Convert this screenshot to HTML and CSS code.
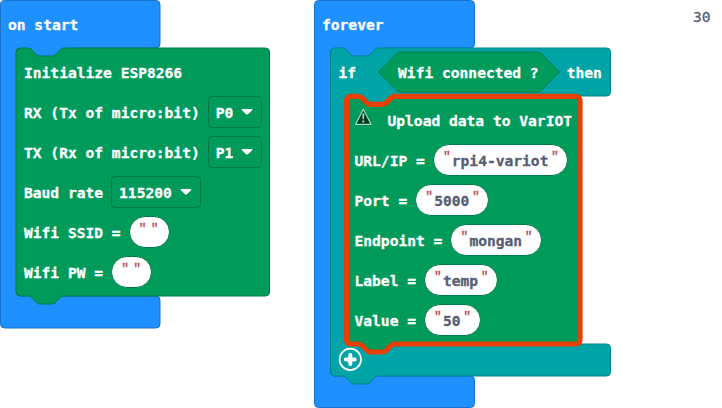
FILE: index.html
```html
<!DOCTYPE html>
<html lang="en">
<head>
<meta charset="utf-8">
<title>Blocks workspace</title>
<link rel="stylesheet" href="styles.css">
</head>
<body>
<main class="workspace">
  <section class="stack stack-start">
    <svg class="shape" width="280" height="332" aria-hidden="true">
      <path class="event" d="M4.500 .5H156a4 4 0 0 1 4 4V44a4 4 0 0 1-4 4H70V60H20V296H156a4 4 0 0 1 4 4V324a4 4 0 0 1-4 4H4.500a4 4 0 0 1-4-4V4.500a4 4 0 0 1 4-4z"/>
      <path class="wifi" d="M20 48H28c2 0 3 1 4 2l4 4c1 1 2 2 4 2h12c2 0 3-1 4-2l4-4c1-1 2-2 4-2H265.500a4 4 0 0 1 4 4V292a4 4 0 0 1-4 4H64c-2 0-3 1-4 2l-4 4c-1 1-2 2-4 2h-12c-2 0-3-1-4-2l-4-4c-1-1-2-2-4-2H20a4 4 0 0 1-4-4V52a4 4 0 0 1 4-4z"/>
    </svg>
    <div class="hat">on start</div>
    <div class="body">
      <div class="row"><span>Initialize ESP8266</span></div>
      <div class="row"><span>RX (Tx of micro:bit)</span><span class="drop"><b>P0</b><svg width="12" height="8"><path d="M1.500 1H10.500Q12 1 11 2.200L7 6.200Q6 7 5 6.200L1 2.200Q0 1 1.500 1z"/></svg></span></div>
      <div class="row"><span>TX (Rx of micro:bit)</span><span class="drop"><b>P1</b><svg width="12" height="8"><path d="M1.500 1H10.500Q12 1 11 2.200L7 6.200Q6 7 5 6.200L1 2.200Q0 1 1.500 1z"/></svg></span></div>
      <div class="row"><span>Baud rate</span><span class="drop"><b>115200</b><svg width="12" height="8"><path d="M1.500 1H10.500Q12 1 11 2.200L7 6.200Q6 7 5 6.200L1 2.200Q0 1 1.500 1z"/></svg></span></div>
      <div class="row"><span>Wifi SSID =</span><span class="pill empty"><i>"</i><i>"</i></span></div>
      <div class="row"><span>Wifi PW =</span><span class="pill empty"><i>"</i><i>"</i></span></div>
    </div>
  </section>

  <section class="stack stack-forever">
    <svg class="shape" width="300" height="408" aria-hidden="true">
      <path class="event" d="M4.500 .5H156.500a4 4 0 0 1 4 4V44a4 4 0 0 1-4 4H70V60H20V376H156.500a4 4 0 0 1 4 4V403.500a4 4 0 0 1-4 4H4.500a4 4 0 0 1-4-4V4.500a4 4 0 0 1 4-4z"/>
      <path class="logic" d="M20.500 48H28.500c2 0 3 1 4 2l4 4c1 1 2 2 4 2h12c2 0 3-1 4-2l4-4c1-1 2-2 4-2H292.500a4 4 0 0 1 4 4V92a4 4 0 0 1-4 4H96V110H36V344H292.500a4 4 0 0 1 4 4V372a4 4 0 0 1-4 4H64.500c-2 0-3 1-4 2l-4 4c-1 1-2 2-4 2h-12c-2 0-3-1-4-2l-4-4c-1-1-2-2-4-2H20.500a4 4 0 0 1-4-4V52a4 4 0 0 1 4-4z"/>
      <path class="wifi" d="M84.500 52H225.500l20 20-20 20H84.500l-20-20z"/>
      <path class="wifi selected" d="M36.500 96.300H44.500c2 0 3 1 4 2l4 4c1 1 2 2 4 2h12c2 0 3-1 4-2l4-4c1-1 2-2 4-2H262a4 4 0 0 1 4 4V340a4 4 0 0 1-4 4H80.500c-2 0-3 1-4 2l-4 4c-1 1-2 2-4 2h-12c-2 0-3-1-4-2l-4-4c-1-1-2-2-4-2H36.500a4 4 0 0 1-4-4V100.300a4 4 0 0 1 4-4z"/>
    </svg>
    <div class="hat">forever</div>
    <div class="row condition"><span>if</span><span class="test">Wifi connected ?</span><span>then</span></div>
    <div class="body nested">
      <div class="row title">
        <svg class="warn" width="18" height="18"><path d="M8.300 1.300L16 16.300H.7z" fill="#00391f" stroke="#a5d9c1" stroke-width="1.200" stroke-linejoin="round"/><path d="M7.300 5.500h2l-.3 5.700H7.600zM7.300 12.500h2v2h-2z" fill="#a5d9c1"/></svg>
        <span>Upload data to VarIOT</span>
      </div>
      <div class="row"><span>URL/IP =</span><span class="pill"><i>"</i><b>rpi4-variot</b><i>"</i></span></div>
      <div class="row"><span>Port =</span><span class="pill"><i>"</i><b>5000</b><i>"</i></span></div>
      <div class="row"><span>Endpoint =</span><span class="pill"><i>"</i><b>mongan</b><i>"</i></span></div>
      <div class="row"><span>Label =</span><span class="pill"><i>"</i><b>temp</b><i>"</i></span></div>
      <div class="row"><span>Value =</span><span class="pill"><i>"</i><b>50</b><i>"</i></span></div>
    </div>
    <svg class="add" width="24" height="24"><circle cx="12.300" cy="12.400" r="10.700" fill="none" stroke="#fff" stroke-width="1.700"/><path d="M12.300 7.900v9M7.800 12.400h9" stroke="#fff" stroke-width="4" stroke-linecap="round"/></svg>
  </section>

  <div class="loose">30</div>
</main>
</body>
</html>
```

FILE: styles.css
```css
body {
  margin: 0;
  background: #fff;
}

.workspace {
  position: relative;
  z-index: 0;
  width: 722px;
  height: 408px;
  overflow: hidden;
  font: bold 14.6px/20px "DejaVu Sans Mono", monospace;
  color: #fff;
  white-space: nowrap;
  -webkit-text-stroke: 0.3px currentColor;
}

.stack {
  position: absolute;
  top: 0;
}

.stack-start { left: 0; }
.stack-forever { left: 314px; }

.shape {
  position: absolute;
  left: 0;
  top: 0;
  z-index: -1;
}

.event { fill: #1e90ff; stroke: #1873cc; }
.wifi { fill: #009b5b; stroke: #007c49; }
.logic { fill: #00a4a6; stroke: #008385; }
.wifi.selected { stroke: #e63f00; stroke-width: 5.2; stroke-linejoin: round; }

.hat {
  height: 37px;
  padding: 15px 0 0 8px;
}

.body { padding-left: 24px; }

.row {
  display: flex;
  align-items: center;
  gap: 8px;
  height: 40px;
}

.row > span:first-child,
.condition > span,
.title > span { padding-top: 2px; }

.condition {
  gap: 28px;
  padding-left: 24.5px;
}

.condition > span:first-child { margin-right: 14px; }

.nested { padding: 8px 0 0 40.5px; }

.drop {
  display: flex;
  align-items: center;
  gap: 8px;
  box-sizing: border-box;
  height: 32.5px;
  padding: 0 8px 0 7px;
  border: 1px solid #007c49;
  border-radius: 4px;
}

.drop b { padding-top: 1px; }
.drop svg { fill: #fff; }

.pill {
  display: flex;
  align-items: center;
  box-sizing: border-box;
  height: 32px;
  padding: 0 6px 0 8px;
  border: 1px solid #007c49;
  border-radius: 16px;
  background: #fff;
  color: #575e75;
}

.pill b { padding-top: 2px; }

.pill i {
  width: 10px;
  height: 26px;
  font: normal 13px/20px "Liberation Mono", monospace;
  text-align: center;
  color: #b8474d;
}

.pill i:last-child { width: 13px; }
.pill.empty { padding-right: 7px; }
.pill.empty i:last-child { width: 14px; }

.title { gap: 15px; }
.warn { margin-top: -7px; }

.add {
  display: block;
  margin: 7px 0 0 24px;
}

.loose {
  position: absolute;
  left: 693px;
  top: 7px;
  font-weight: normal;
  color: #575e75;
}
```
